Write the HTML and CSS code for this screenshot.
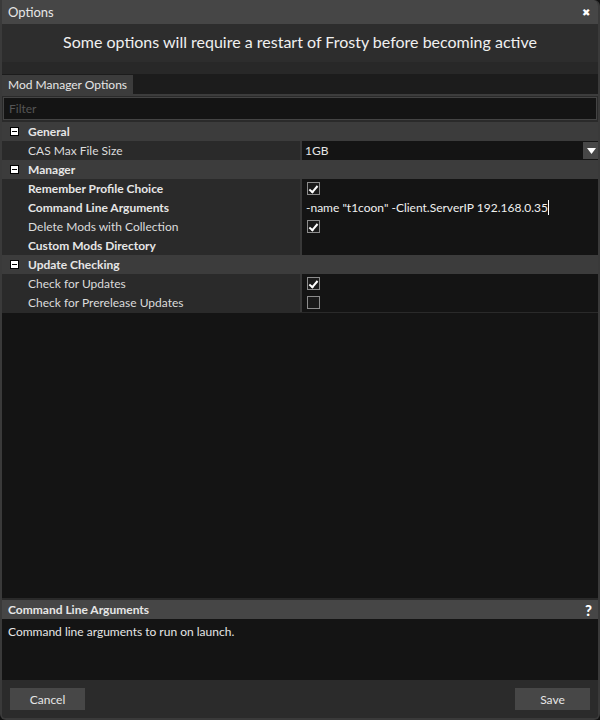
FILE: index.html
```html
<!DOCTYPE html>
<html lang="en">
  <head>
    <meta charset="UTF-8" />
    <meta name="viewport" content="width=device-width, initial-scale=1.0" />
    <title>Options</title>
    <link rel="stylesheet" href="styles.css">
  </head>
  <body>
    <div class="window">
      <div class="titlebar">
        <span class="title">Options</span>
        <span class="close">&#x2716;</span>
      </div>
      <div class="notice">Some options will require a restart of Frosty before becoming active</div>
      <div class="band"></div>
      <div class="tabs">
        <div class="tab">Mod Manager Options</div>
      </div>
      <div class="panel">
        <div class="filter">
          <input type="text" placeholder="Filter" />
        </div>
        <div class="grid">
          <div class="category"><span class="toggle"></span>General</div>
          <div class="row">
            <div class="label">CAS Max File Size</div>
            <div class="value combo">
              <span>1GB</span>
              <span class="drop"><svg width="9" height="6" viewBox="0 0 9 6"><path d="M0 0 H9 L4.5 6 Z" fill="#fff"/></svg></span>
            </div>
          </div>
          <div class="category"><span class="toggle"></span>Manager</div>
          <div class="row">
            <div class="label bold">Remember Profile Choice</div>
            <div class="value"><span class="check on"></span></div>
          </div>
          <div class="row">
            <div class="label bold">Command Line Arguments</div>
            <div class="value text">-name "t1coon" -Client.ServerIP 192.168.0.35<span class="caret"></span></div>
          </div>
          <div class="row">
            <div class="label">Delete Mods with Collection</div>
            <div class="value"><span class="check on"></span></div>
          </div>
          <div class="row">
            <div class="label bold">Custom Mods Directory</div>
            <div class="value"></div>
          </div>
          <div class="category"><span class="toggle"></span>Update Checking</div>
          <div class="row">
            <div class="label">Check for Updates</div>
            <div class="value"><span class="check on"></span></div>
          </div>
          <div class="row">
            <div class="label">Check for Prerelease Updates</div>
            <div class="value"><span class="check"></span></div>
          </div>
        </div>
        <div class="empty"></div>
        <div class="help-head">
          <span>Command Line Arguments</span>
          <span class="help-icon">?</span>
        </div>
        <div class="help-body">Command line arguments to run on launch.</div>
      </div>
      <div class="footer">
        <button type="button">Cancel</button>
        <button type="button">Save</button>
      </div>
    </div>
  </body>
</html>
```

FILE: styles.css
```css
body {
  margin: 0;
  background-color: #111;
  font-family: "Lato", "Open Sans", sans-serif;
  color: #e6e6e6;
}
.window {
  width: 600px;
  height: 720px;
  box-sizing: border-box;
  border: 2px solid #3a3a3a;
  border-top: none;
  border-radius: 0 6px 6px 6px;
  background-color: #2d2d2d;
  display: flex;
  flex-direction: column;
  overflow: hidden;
}
.titlebar {
  height: 24px;
  margin: 0 -2px;
  padding: 0 8px;
  background-color: #464646;
  display: flex;
  align-items: center;
  justify-content: space-between;
  font-size: 13px;
  border-radius: 0 6px 0 0;
}
.close {
  font-size: 10px;
  color: #fff;
  margin-right: 2px;
}
.notice {
  height: 38px;
  box-sizing: border-box;
  padding-bottom: 3px;
  display: flex;
  align-items: center;
  justify-content: center;
  font-size: 16px;
  color: #f0f0f0;
}
.band {
  height: 12px;
  background-color: #282828;
  border-bottom: 1px solid #1c1c1c;
}
.tabs {
  height: 19px;
  background-color: #1c1c1c;
  display: flex;
  border-bottom: 2px solid #3c3c3c;
}
.tab {
  background-color: #3c3c3c;
  padding: 0 6px;
  font-size: 12px;
  line-height: 19px;
}
.panel {
  flex: 1;
  display: flex;
  flex-direction: column;
  background-color: #1e1e1e;
}
.filter {
  padding: 1px 1px 2px 1px;
  background-color: #2a2a2a;
}
.filter input {
  width: 100%;
  box-sizing: border-box;
  height: 23px;
  border: 1px solid #444;
  background-color: #141414;
  color: #ddd;
  font-family: inherit;
  font-size: 12px;
  padding: 0 5px;
  outline: none;
}
.filter input::placeholder {
  color: #555;
}
.grid {
  display: flex;
  flex-direction: column;
  background-color: #383838;
}
.category {
  height: 19px;
  background-color: #3c3c3c;
  display: flex;
  align-items: center;
  font-size: 12px;
  font-weight: bold;
}
.toggle {
  width: 9px;
  height: 9px;
  box-sizing: border-box;
  margin: 0 9px 0 8px;
  background-color: #fff;
  border: 1px solid #000;
  position: relative;
}
.toggle::after {
  content: "";
  position: absolute;
  left: 1px;
  right: 1px;
  top: 3px;
  height: 1px;
  background-color: #000;
}
.row {
  height: 19px;
  display: grid;
  grid-template-columns: 298px 298px;
  column-gap: 2px;
  font-size: 12px;
}
.label {
  background-color: #2a2a2a;
  padding-left: 26px;
  line-height: 19px;
  color: #dcdcdc;
}
.label.bold {
  font-weight: bold;
  color: #e6e6e6;
}
.value {
  background-color: #141414;
  display: flex;
  align-items: center;
  padding-left: 5px;
}
.value.text {
  padding-left: 4px;
  color: #f0f0f0;
}
.caret {
  width: 1px;
  height: 15px;
  background-color: #fff;
}
.combo {
  justify-content: space-between;
  padding-left: 3px;
}
.drop {
  width: 16px;
  height: 17px;
  margin-right: 1px;
  background-color: #474747;
  display: flex;
  align-items: center;
  justify-content: center;
}
.check {
  width: 13px;
  height: 13px;
  box-sizing: border-box;
  border: 1px solid #8c8c8c;
  background-color: #1a1a1a;
  position: relative;
}
.check.on::after {
  content: "";
  position: absolute;
  left: 3px;
  top: 1px;
  width: 3px;
  height: 7px;
  border: solid #fff;
  border-width: 0 2px 2px 0;
  transform: rotate(40deg);
}
.empty {
  flex: 1;
  background-color: #141414;
  border-top: 1px solid #2a2a2a;
  border-bottom: 2px solid #2a2a2a;
}
.help-head {
  height: 19px;
  background-color: #464646;
  display: flex;
  align-items: center;
  justify-content: space-between;
  padding: 0 6px;
  font-size: 12px;
  font-weight: bold;
}
.help-icon {
  font-size: 15px;
  font-weight: 900;
  color: #fff;
}
.help-body {
  height: 61px;
  background-color: #141414;
  padding: 5px 6px;
  box-sizing: border-box;
  font-size: 12px;
}
.footer {
  height: 38px;
  background-color: #2b2b2b;
  display: flex;
  align-items: center;
  justify-content: space-between;
  padding: 0 8px;
}
.footer button {
  width: 75px;
  height: 22px;
  border: none;
  background-color: #474747;
  color: #e6e6e6;
  font-family: inherit;
  font-size: 12px;
}
```
